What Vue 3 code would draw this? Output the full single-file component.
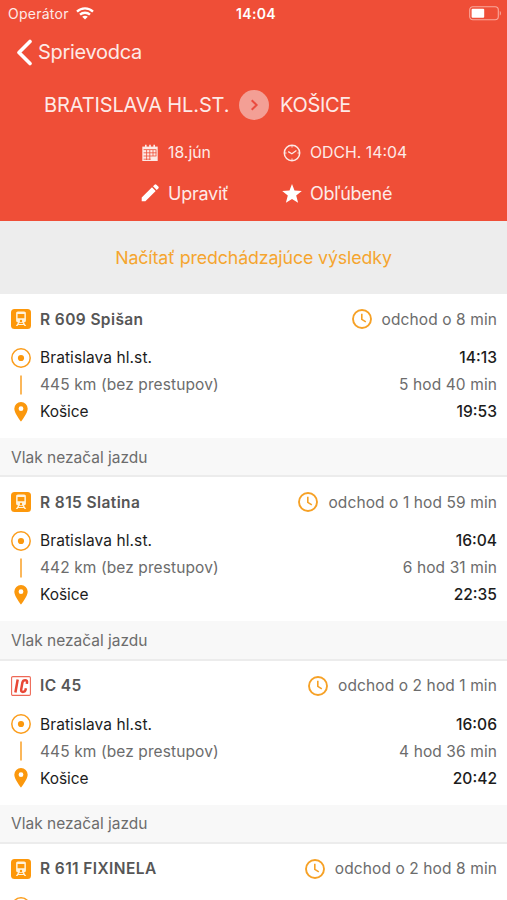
<script setup>
const trips = [
  { kind: 'train', name: 'R 609 Spišan', leaves: 'odchod o 8 min', dep: '14:13', arr: '19:53', km: '445 km', dur: '5 hod 40 min' },
  { kind: 'train', name: 'R 815 Slatina', leaves: 'odchod o 1 hod 59 min', dep: '16:04', arr: '22:35', km: '442 km', dur: '6 hod 31 min' },
  { kind: 'ic', name: 'IC 45', leaves: 'odchod o 2 hod 1 min', dep: '16:06', arr: '20:42', km: '445 km', dur: '4 hod 36 min' },
  { kind: 'train', name: 'R 611 FIXINELA', leaves: 'odchod o 2 hod 8 min' },
]
</script>

<template>
  <div class="screen">
    <header class="top">
      <div class="statusbar">
        <div class="carrier">
          <span>Operátor</span>
          <svg class="wifi" width="18" height="13" viewBox="0 0 18 13" fill="none" stroke="#fff" stroke-width="2.3">
            <path d="M1 4.6C5.4.3 12.6.3 17 4.6" />
            <path d="M4 7.7c2.8-2.6 7.2-2.6 10 0" />
            <path d="M9 12.6 6.2 9.8c1.6-1.4 4-1.4 5.6 0z" fill="#fff" stroke="none" />
          </svg>
        </div>
        <span class="time">14:04</span>
        <div class="power">
          <svg width="33" height="15" viewBox="0 0 33 15">
            <rect x=".7" y=".7" width="28.6" height="13" rx="3.2" fill="none" stroke="#f9a99d" stroke-width="1.1" />
            <rect x="2.6" y="2.7" width="12.6" height="9" rx="1" fill="#fff" />
            <path d="M30.8 5v4.6c1.5-.6 1.5-4 0-4.6z" fill="#f9a99d" />
          </svg>
        </div>
      </div>
      <nav class="back">
        <svg width="17" height="27" viewBox="0 0 17 27" fill="none" stroke="#fff" stroke-width="3.6" stroke-linecap="round" stroke-linejoin="round">
          <path d="M14 2.5 3 13.5 14 24.5" />
        </svg>
        <span>Sprievodca</span>
      </nav>
      <div class="route">
        <span class="from">BRATISLAVA HL.ST.</span>
        <svg class="swap" width="30" height="30" viewBox="0 0 30 30">
          <circle cx="15" cy="15" r="15" fill="#f39f95" />
          <path d="m12.7 10.2 4.9 4.8-4.9 4.8" fill="none" stroke="#ea4c40" stroke-width="2" />
        </svg>
        <span class="to">KOŠICE</span>
      </div>
      <div class="actions">
        <div class="action small">
          <svg width="18" height="18" viewBox="0 0 18 18">
            <path d="M1.3 2.6h15.4V17H1.3z" fill="#fde9e5" />
            <path d="M4.8.7v3.4M9 .7v3.4M13.2.7v3.4" stroke="#fde9e5" stroke-width="1.6" />
            <path d="M2.6 5.6h12.8M2.6 8.8h12.8M2.6 12h12.8M2.6 15.2h7M5.6 6v10M8.8 6v10M12 6v6M15 6v6" stroke="#ef4e37" stroke-width=".8" />
          </svg>
          <span class="date">18.jún</span>
        </div>
        <div class="action small">
          <svg width="18" height="18" viewBox="0 0 18 18" fill="none" stroke="#fde9e5">
            <circle cx="9" cy="9" r="7.7" stroke-width="1.5" />
            <path d="m5.2 7.6 3.7 2.1 4.5-3.2" stroke-width="1.3" />
            <path d="M9 1.5v2M9 14.5v2M1.5 9h2M14.5 9h2" stroke-width="1" />
          </svg>
          <span class="when">ODCH. 14:04</span>
        </div>
        <div class="action">
          <svg width="18" height="18" viewBox="0 0 18 18" fill="#fff">
            <path d="M.7 17.3v-3.7L11 3.3 14.7 7 4.4 17.3zM12 2.3 13.6.7a1.3 1.3 0 0 1 1.8 0l1.9 1.9a1.3 1.3 0 0 1 0 1.8L15.7 6z" />
          </svg>
          <span class="edit">Upraviť</span>
        </div>
        <div class="action">
          <svg class="star" width="20" height="19" viewBox="0 0 20 19" fill="#fff">
            <path d="m10 0 2.5 6.6 7.3.4-5.6 4.600 1.900 7.200L10 14.900l-6.100 3.900 1.900-7.200L.2 7l7.300-.4z" />
          </svg>
          <span class="fav">Obľúbené</span>
        </div>
      </div>
    </header>

    <div class="earlier"><span>Načítať predchádzajúce výsledky</span></div>

    <article v-for="t in trips" :key="t.name" class="trip">
      <div class="head">
        <svg v-if="t.kind === 'train'" class="icon" width="20" height="20" viewBox="0 0 20 20">
          <rect width="20" height="20" rx="3.5" fill="#fd980b" />
          <path fill-rule="evenodd" fill="#fff3dc" d="M7 2.6h6c1.3 0 1.9.7 1.9 1.8v7.2c0 1.2-.9 2-2 2l2.3 3.5h-1.7l-.7-1.1H7.200l-.7 1.1H4.800l2.300-3.500c-1.100 0-2-.8-2-2V4.400c0-1.100.6-1.800 1.900-1.800zM6.600 5v4.300h6.800V5zM10 10.700a1.200 1.200 0 1 0 0 2.400 1.200 1.200 0 0 0 0-2.400zM8.500 13.700l-.8 1.300h4.600l-.8-1.300z" />
        </svg>
        <svg v-else class="icon" width="20" height="20" viewBox="0 0 20 20">
          <rect x=".6" y=".6" width="18.8" height="18.8" rx="1.2" fill="#fff" stroke="#ee6856" stroke-width="1.1" />
          <path d="M6.700 3.500 4.400 16.500M15.800 7.900l.2-1.300c.3-1.700-.4-2.400-1.800-2.400s-2.500.8-2.800 2.400l-1.200 6.800c-.3 1.700.3 2.500 1.700 2.500s2.500-.8 2.800-2.500l.2-1.200" fill="none" stroke="#e84735" stroke-width="2.5" />
        </svg>
        <span class="name">{{ t.name }}</span>
        <svg class="clock" width="20" height="20" viewBox="0 0 20 20" fill="none" stroke="#f6a126">
          <circle cx="10" cy="10" r="9" stroke-width="1.9" />
          <path d="M9.800 4.800v5.600l4 2.500" stroke-width="1.6" />
        </svg>
        <span class="leaves">{{ t.leaves }}</span>
      </div>
      <div class="line strong">
        <svg class="icon" width="20" height="20" viewBox="0 0 20 20">
          <circle cx="10" cy="10" r="9.2" fill="none" stroke="#fb9d1c" stroke-width="1.5" />
          <circle cx="10" cy="10" r="3.1" fill="#fb980d" />
        </svg>
        <template v-if="t.dep">
          <span class="station">Bratislava hl.st.</span><span class="clocktime">{{ t.dep }}</span>
        </template>
      </div>
      <template v-if="t.dep">
        <div class="line">
          <svg class="icon" width="20" height="20" viewBox="0 0 20 20">
            <path d="M10 .5v19" stroke="#fbab3e" stroke-width="1.7" />
          </svg>
          <span class="distance">{{ t.km }} (bez prestupov)</span><span class="duration">{{ t.dur }}</span>
        </div>
        <div class="line strong">
          <svg class="icon" width="20" height="20" viewBox="0 0 20 20">
            <path fill-rule="evenodd" fill="#fb980d" d="M10 0a6.700 6.700 0 0 1 6.700 6.700c0 4.500-6.700 12.800-6.700 12.800S3.300 11.200 3.300 6.700A6.700 6.700 0 0 1 10 0zm0 4.300a2.400 2.400 0 1 0 0 4.800 2.400 2.400 0 0 0 0-4.800z" />
          </svg>
          <span class="dest">Košice</span><span class="clocktime">{{ t.arr }}</span>
        </div>
        <footer class="note"><span>Vlak nezačal jazdu</span></footer>
      </template>
    </article>
  </div>
</template>

<style>
body { background: #fff; overflow: hidden; }
</style>

<style scoped>
.screen {
  height: 900px;
  overflow: hidden;
  background: #fff;
  font-family: Inter, "Liberation Sans", sans-serif;
  font-size: 15.5px;
  white-space: nowrap;
  color: #6c6c6c;
}
.screen svg { display: block; flex: none; }
.top {
  box-sizing: border-box;
  height: 221px;
  background: #ef4e37;
  color: #fdeae7;
}
.statusbar {
  display: grid;
  grid-template-columns: 1fr auto 1fr;
  align-items: center;
  height: 27px;
  padding: 0 5px 0 8px;
  font-size: 14px;
}
.carrier { display: flex; align-items: center; gap: 7px; letter-spacing: .25px; }
.time { padding-left: 2px; font-weight: 600; color: #fff; letter-spacing: .35px; }
.power { display: flex; justify-content: flex-end; }
.back {
  display: flex;
  align-items: center;
  gap: 5px;
  height: 50px;
  padding-left: 16px;
  font-size: 20px;
  letter-spacing: -.3px;
}
.route {
  display: flex;
  align-items: center;
  height: 55px;
  padding-left: 44px;
  font-size: 20px;
}
.route .from { width: 195px; letter-spacing: -.13px; }
.route .to { margin-left: 11px; letter-spacing: -.3px; }
.actions {
  display: grid;
  grid-template-columns: 142px 1fr;
  grid-template-rows: 41px 40px;
  padding-left: 140.5px;
}
.action { display: flex; align-items: center; gap: 9.5px; font-size: 18px; letter-spacing: -.25px; }
.action.small { font-size: 15.8px; letter-spacing: 0; }
.star { margin: 0 -1px 0 -1px; }
.earlier {
  display: flex;
  align-items: center;
  justify-content: center;
  height: 73px;
  background: #ededed;
  color: #f5a52f;
  font-size: 17.8px;
  letter-spacing: -.12px;
}
.trip { border-bottom: 2px solid #ececec; }
.head, .line { display: flex; align-items: center; padding: 0 10px 0 10.5px; }
.head { height: 50px; }
.line { height: 27px; }
.icon { margin-right: 9.5px; }
.name { font-weight: 600; color: #565656; letter-spacing: .4px; }
.leaves { letter-spacing: .1px; }
.clock { margin-left: auto; margin-right: 10px; }
.strong { color: #1c1c1c; }
.station { letter-spacing: .08px; }
.distance { letter-spacing: .1px; }
.dest { letter-spacing: -.1px; }
.clocktime, .duration { margin-left: auto; }
.clocktime { font-weight: 500; font-size: 15.6px; }
.duration { letter-spacing: .1px; }
.note {
  display: flex;
  align-items: center;
  height: 37.3px;
  margin-top: 13px;
  padding-left: 11px;
  background: #f8f8f8;
}
.note span { padding-top: 1px; }
</style>
